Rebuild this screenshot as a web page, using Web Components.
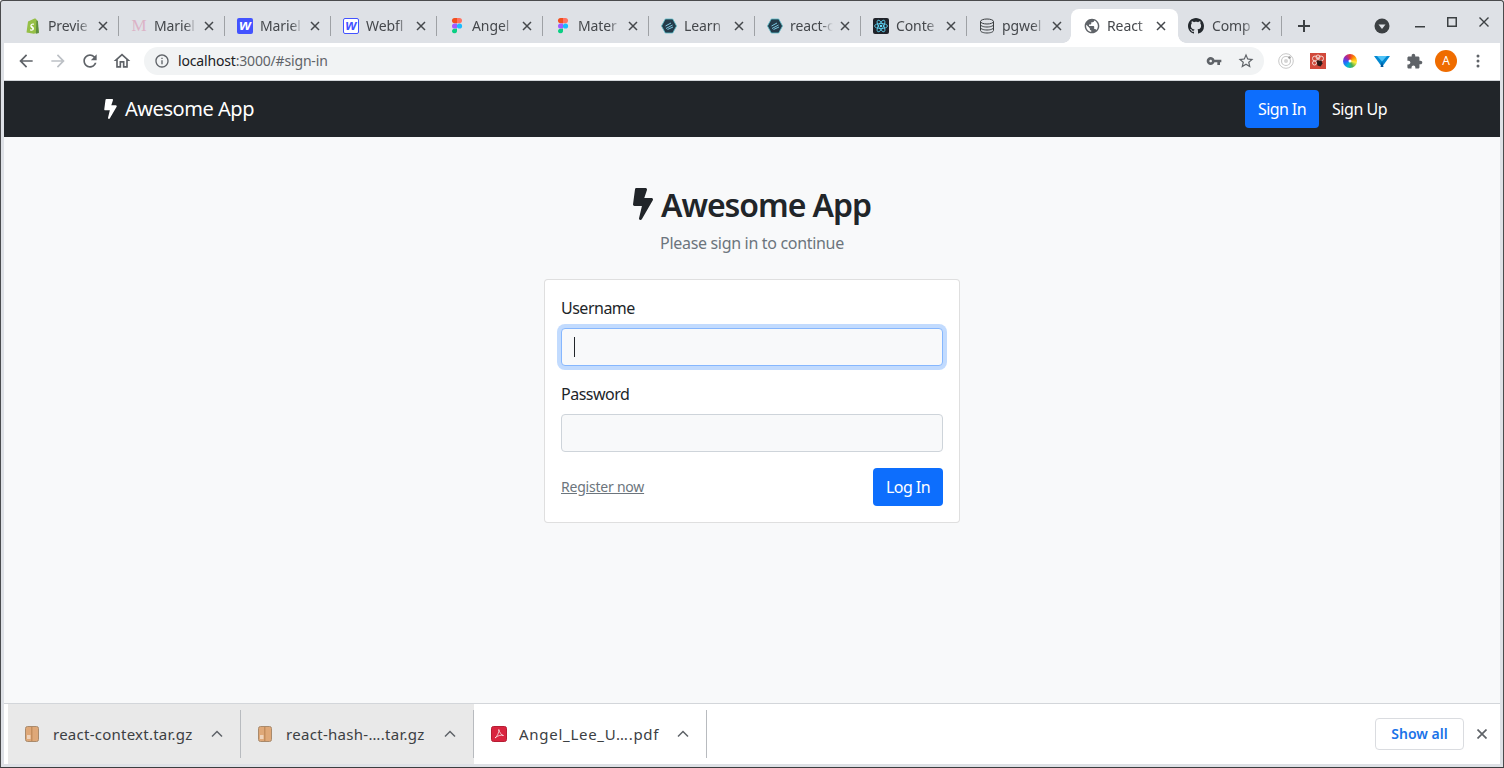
<!DOCTYPE html>
<html lang="en"><head><meta charset="utf-8"><title>React App</title>
<style>
html,body{margin:0;height:100%;overflow:hidden}
body{font-family:"Noto Sans","Open Sans",sans-serif}
svg{display:block}
</style></head><body>
<template id="bolt-t"><svg viewBox="0 0 320 512" width="100%" height="100%" style="display:block"><path fill="currentColor" d="M296 160H180.6l42.6-129.8C227.2 15 215.7 0 200 0H56C44 0 33.8 8.9 32.2 20.8l-32 240C-1.7 275.2 9.5 288 24 288h118.7L96.6 482.5c-3.6 15.2 8 29.5 23.3 29.5 8.4 0 16.4-4.4 20.8-12l176-304c9.3-15.9-2.2-36-20.7-36z"/></svg></template>

<app-window>
  <tab-strip slot="tabs">
    <chrome-tab label="Previe"><svg slot="icon" width="16" height="16" viewBox="0 0 16 16" style="display:block"><path fill="#95bf47" d="M3 3.6 9.6.6c.8-.3 1.4 0 1.8 1l.8 1 1.6 12-5 1.2-7.3-1.4z"/><path fill="#5e8e3e" d="m11.4 2.5 1.2.3.3.3 1 12-3 .7z"/><path fill="#fff" d="M9 5.7 8.6 7c-1.4-.6-2.1 0-2 .5.1.8 2.4 1 2.4 3.1 0 2-2.6 2.9-4 1.7l.4-1.4c.8.7 2 .8 2 0 0-1-2-1-2.1-2.9C5.200 6.200 7.400 4.900 9 5.700z"/></svg></chrome-tab>
    <chrome-tab label="Mariel"><span slot="icon" style="display:block;width:16px;text-align:center;font:17px/16px 'Liberation Serif',serif;color:#dcb3c6">M</span></chrome-tab>
    <chrome-tab label="Mariel"><span slot="icon" style="display:block;width:16px;height:16px;border-radius:2px;background:#4353ff;color:#fff;text-align:center;font:italic 700 15px/14px 'Liberation Sans',sans-serif">w</span></chrome-tab>
    <chrome-tab label="Webfl"><span slot="icon" style="display:block;box-sizing:border-box;width:16px;height:16px;border-radius:2px;border:1px solid #4353ff;background:#fff;color:#4353ff;text-align:center;font:italic 700 14px/12px 'Liberation Sans',sans-serif">w</span></chrome-tab>
    <chrome-tab label="Angel"><fig-icon slot="icon"></fig-icon></chrome-tab>
    <chrome-tab label="Mater"><fig-icon slot="icon"></fig-icon></chrome-tab>
    <chrome-tab label="Learn"><hex-icon slot="icon"></hex-icon></chrome-tab>
    <chrome-tab label="react-c"><hex-icon slot="icon"></hex-icon></chrome-tab>
    <chrome-tab label="Conte"><svg slot="icon" width="16" height="16" viewBox="0 0 16 16" style="display:block"><rect width="16" height="16" rx="2" fill="#20232a"/><g fill="none" stroke="#61dafb" stroke-width=".8"><ellipse cx="8" cy="8" rx="6.500" ry="2.500"/><ellipse cx="8" cy="8" rx="6.500" ry="2.500" transform="rotate(60 8 8)"/><ellipse cx="8" cy="8" rx="6.500" ry="2.500" transform="rotate(120 8 8)"/></g><circle cx="8" cy="8" r="1.300" fill="#61dafb"/></svg></chrome-tab>
    <chrome-tab label="pgwel"><svg slot="icon" width="16" height="16" viewBox="0 0 16 16" style="display:block"><g fill="none" stroke="#3c4043" stroke-width="1"><ellipse cx="8" cy="3.500" rx="6.500" ry="2.500"/><path d="M1.500 3.500v9c0 1.400 2.900 2.500 6.500 2.500s6.500-1.100 6.500-2.500v-9M1.500 6.500C1.500 7.900 4.400 9 8 9s6.500-1.100 6.500-2.500M1.500 9.500c0 1.400 2.900 2.500 6.500 2.500s6.500-1.100 6.500-2.500"/></g></svg></chrome-tab>
    <chrome-tab label="React" active><svg slot="icon" width="16" height="16" viewBox="0 0 24 24" style="display:block"><path fill="#5f6368" d="M12 1C5.900 1 1 5.900 1 12s4.900 11 11 11 11-4.900 11-11S18.100 1 12 1zm-1.100 19.800C6.600 20.300 3.200 16.500 3.200 12c0-.7.100-1.300.2-2l5.300 5.300v1.100c0 1.200 1 2.200 2.200 2.200zm7.600-2.800c-.3-.9-1.100-1.500-2.100-1.500h-1.100v-3.300c0-.6-.5-1.100-1.100-1.100H7.600V9.800h2.200c.6 0 1.100-.5 1.100-1.100V6.500h2.200c1.200 0 2.200-1 2.200-2.200v-.5c3.200 1.300 5.500 4.500 5.500 8.200 0 2.300-.9 4.400-2.300 6z"/></svg></chrome-tab>
    <chrome-tab label="Comp" after-active><svg slot="icon" width="16" height="16" viewBox="0 0 16 16" style="display:block"><path fill="#24292e" d="M8 0C3.580 0 0 3.580 0 8c0 3.540 2.290 6.530 5.470 7.590.4.070.55-.17.55-.38 0-.19-.01-.82-.01-1.490-2.010.37-2.530-.49-2.690-.94-.09-.23-.48-.94-.82-1.130-.28-.15-.68-.52-.01-.53.63-.01 1.080.58 1.230.82.72 1.210 1.870.87 2.330.66.070-.52.28-.87.51-1.070-1.780-.2-3.640-.89-3.640-3.950 0-.87.31-1.590.82-2.150-.08-.2-.36-1.020.08-2.120 0 0 .67-.21 2.200.82.64-.18 1.320-.27 2-.27.68 0 1.360.09 2 .27 1.530-1.040 2.200-.82 2.200-.82.44 1.100.16 1.920.08 2.120.51.56.82 1.270.82 2.150 0 3.070-1.870 3.750-3.650 3.950.29.25.54.73.54 1.480 0 1.070-.01 1.930-.01 2.200 0 .21.15.46.55.38A8.013 8.013 0 0016 8c0-4.420-3.580-8-8-8z"/></svg></chrome-tab>
  </tab-strip>
  <tool-bar slot="toolbar"></tool-bar>
  <site-nav slot="nav"></site-nav>
  <sign-in-page slot="main"></sign-in-page>
  <download-bar slot="downloads">
    <download-item label="react-context.tar.gz" tint><pkg-icon slot="icon"></pkg-icon></download-item>
    <download-item label="react-hash-….tar.gz" tint style="--ls:.3px"><pkg-icon slot="icon"></pkg-icon></download-item>
    <download-item label="Angel_Lee_U….pdf" style="--ls:.72px"><svg slot="icon" width="16" height="16" viewBox="0 0 16 16" style="display:block"><rect x=".5" y=".5" width="15" height="15" rx="2" fill="#d9243f" stroke="#b51d33"/><path fill="none" stroke="#fff" stroke-width=".7" d="M7.800 3.500c.5 2.500-1.500 7-3.800 8.500 3-2.500 5.500-3.200 8.500-2.500-2-.2-4-3-4.700-6z"/></svg></download-item>
  </download-bar>
</app-window>

<script>
const def=(n,html,init)=>customElements.define(n,class extends HTMLElement{
  connectedCallback(){ if(this.shadowRoot)return; const r=this.attachShadow({mode:'open'});
    r.innerHTML=typeof html==='function'?html(this):html; init&&init(r,this);}
});
const UI='"Noto Sans","Open Sans",sans-serif';
const ic=(d,fill='#5f6368',s=24,box=24)=>`<svg width="${s}" height="${s}" viewBox="0 0 ${box} ${box}" style="display:block"><path fill="${fill}" d="${d}"/></svg>`;
const bolt=()=>document.getElementById('bolt-t').innerHTML;

def('app-window',`<style>
:host{display:flex;flex-direction:column;box-sizing:border-box;width:1504px;height:768px;border:1px solid #4a4b4d;border-bottom-color:#3c3d3f;border-radius:3px 3px 0 0;padding:0 3px 3px;background:#dee1e6;overflow:hidden}
main{flex:1;min-height:0;display:flex;flex-direction:column;background:#f8f9fa}
</style><slot name="tabs"></slot><slot name="toolbar"></slot><slot name="nav"></slot><main><slot name="main"></slot></main><slot name="downloads"></slot>`);

def('tab-strip',`<style>
:host{display:flex;height:42px;padding-left:8px;align-items:flex-end;background:#dee1e6;color:#3c4043}
svg{display:block}
.tabs{display:flex;align-items:flex-end}
.plus{width:16px;height:16px;margin:0 0 9px 15px}
.right{margin-left:auto;display:flex;align-items:center;height:100%}
.drop{width:16px;height:16px;margin:8px 14px 0 0;}
.min,.max,.cl{width:32px;display:flex;justify-content:center}
.min{margin:10px 0 0}.max{margin:-1px 0 0}.cl{margin:-1px 0 0}
</style><div class="tabs"><slot></slot></div>
<svg class="plus" viewBox="0 0 16 16"><path d="M7 2h2v12H7zM2 7h12v2H2z" fill="#3c4043"/></svg>
<div class="right">
<svg class="drop" viewBox="0 0 16 16"><circle cx="8" cy="8" r="7.500" fill="#3c4043"/><path d="M4.500 6.500h7L8 11z" fill="#dee1e6"/></svg>
<div class="min"><svg width="10" height="2"><rect width="10" height="1.500" fill="#3c4043"/></svg></div>
<div class="max"><svg width="10" height="10"><rect x=".75" y=".75" width="8.500" height="8.500" fill="none" stroke="#3c4043" stroke-width="1.500"/></svg></div>
<div class="cl"><svg width="10" height="10"><path d="M.5.500l9 9M9.500.500l-9 9" stroke="#3c4043" stroke-width="1.400"/></svg></div>
</div>`);

def('chrome-tab',t=>`<style>
:host{display:flex;box-sizing:border-box;width:106px;height:34px;align-items:center;position:relative;padding-left:13px;font:14px/20px ${UI};color:#45484c;letter-spacing:-.1px}
:host([active]){background:#fff;border-radius:8px 8px 0 0;width:107px;margin-left:-1px;z-index:1}
:host([active]) .sep{display:none}
:host([active]) .x{margin-left:6px}
:host([after-active]){margin-left:-3px}
:host([after-active]) .fav{margin-right:8px}
:host([after-active]) .x{margin-left:6px}
:host([active])::before,:host([active])::after{content:"";position:absolute;bottom:0;width:8px;height:8px}
:host([active])::before{left:-8px;background:radial-gradient(circle at 0 0,transparent 7.500px,#fff 8px)}
:host([active])::after{right:-8px;background:radial-gradient(circle at 100% 0,transparent 7.500px,#fff 8px)}
.fav{width:16px;height:16px;flex:none;margin-right:7px}
.title{width:43px;overflow:hidden;white-space:nowrap;-webkit-mask-image:linear-gradient(90deg,#000 72%,transparent);mask-image:linear-gradient(90deg,#000 72%,transparent)}
.x{display:block;margin-left:7px;width:10px;height:10px;flex:none}
.sep{position:absolute;right:-1px;top:7px;width:1px;height:20px;background:#9ea1a5}
</style><span class="fav"><slot name="icon"></slot></span><span class="title">${t.getAttribute('label')}</span>
<svg class="x" viewBox="0 0 10 10"><path d="M1 1l8 8M9 1L1 9" stroke="#45484c" stroke-width="1.500"/></svg><i class="sep"></i>`);

def('fig-icon',`<style>:host{display:block;width:16px;height:16px}</style><svg width="16" height="16" viewBox="0 0 16 16" style="display:block"><path fill="#f24e1e" d="M3 2.600A2.600 2.600 0 0 1 5.600 0H8v5.200H5.600A2.600 2.600 0 0 1 3 2.600z"/><path fill="#ff7262" d="M8 0h2.400a2.600 2.600 0 0 1 0 5.200H8z"/><path fill="#a259ff" d="M3 8a2.600 2.600 0 0 1 2.600-2.600H8v5.200H5.600A2.600 2.600 0 0 1 3 8z"/><circle cx="10.500" cy="8" r="2.600" fill="#1abcfe"/><path fill="#0acf83" d="M3 13.400a2.600 2.600 0 0 1 2.600-2.600H8v2.600a2.600 2.600 0 0 1-5 0z"/></svg>`);
def('hex-icon',`<style>:host{display:block;width:16px;height:16px}</style><svg width="16" height="16" viewBox="0 0 16 16" style="display:block"><path fill="#243b4a" stroke="#5bbcc9" stroke-width=".8" d="M4.300 1h7.400L15.500 8l-3.800 7H4.300L.5 8z"/><path stroke="#7cc6e0" stroke-width="1" d="M4.500 8 10 5M5 10.500l6.500-3.500M6.500 11.500 12 9"/></svg>`);
def('pkg-icon',`<style>:host{display:block;width:14px;height:16px}</style><svg width="14" height="16" viewBox="0 0 14 16" style="display:block"><rect x=".5" y=".5" width="13" height="15" rx="2" fill="#dfa878" stroke="#a98a6c"/><rect x="6" y="1" width="1.500" height="14" fill="#c48d5d"/><path d="M2 10h3.500M2 12h3.500" stroke="#fff"/></svg>`);

def('tool-bar',`<style>
:host{display:flex;box-sizing:border-box;height:38px;background:#fff;border-bottom:1px solid #d3d6da;align-items:center;padding:0 0 1px 6px}
svg{display:block}
.b{width:32px;display:flex;justify-content:center;align-items:center;flex:none}
.o{width:1120px;height:28px;margin-left:6px;border-radius:14px;background:#f1f3f4;display:flex;align-items:center;padding:0 9px 0 10px;box-sizing:border-box;font:14px/20px ${UI};color:#5f6368;letter-spacing:-.17px}
.o b{font-weight:400;color:#202124}
.o .u{margin-left:8px;flex:1}
.o span+svg{margin-right:15px}
.ext{margin-left:6px;display:flex}
.av{width:22px;height:22px;border-radius:50%;background:#ef6c00;color:#fff;font:12px/22px ${UI};text-align:center}
</style>
<div class="b">${ic('M20 11H7.830l5.590-5.590L12 4l-8 8 8 8 1.410-1.410L7.830 13H20v-2z','#5f6368',20)}</div>
<div class="b">${ic('M12 4l-1.410 1.410L16.170 11H4v2h12.170l-5.580 5.590L12 20l8-8z','#bdc1c6',20)}</div>
<div class="b">${ic('M17.650 6.350C16.200 4.900 14.210 4 12 4c-4.420 0-7.990 3.580-7.990 8s3.570 8 7.990 8c3.730 0 6.840-2.550 7.730-6h-2.080c-.82 2.330-3.040 4-5.650 4-3.310 0-6-2.690-6-6s2.690-6 6-6c1.660 0 3.140.69 4.220 1.780L13 11h7V4l-2.350 2.350z','#5f6368',20)}</div>
<div class="b">${ic('M12 5.690l5 4.500V18h-2v-6H9v6H7v-7.810l5-4.500M12 3L2 12h3v8h6v-6h2v6h6v-8h3L12 3z','#5f6368',20)}</div>
<div class="o">${ic('M11 7h2v2h-2zm0 4h2v6h-2zm1-9C6.480 2 2 6.480 2 12s4.480 10 10 10 10-4.480 10-10S17.520 2 12 2zm0 18c-4.410 0-8-3.590-8-8s3.590-8 8-8 8 3.590 8 8-3.590 8-8 8z','#5f6368',16)}
<span class="u"><b>localhost</b>:3000/#sign-in</span>
${ic('M12.650 10C11.830 7.670 9.610 6 7 6c-3.310 0-6 2.690-6 6s2.690 6 6 6c2.610 0 4.830-1.670 5.650-4H17v4h4v-4h2v-4H12.650zM7 14c-1.100 0-2-.9-2-2s.9-2 2-2 2 .9 2 2-.9 2-2 2z','#5f6368',16)}
${ic('M22 9.240l-7.190-.62L12 2 9.190 8.630 2 9.240l5.460 4.730L5.820 21 12 17.270 18.180 21l-1.630-7.030L22 9.240zM12 15.400l-3.760 2.270 1-4.280-3.320-2.880 4.380-.38L12 6.100l1.710 4.040 4.380.38-3.320 2.880 1 4.280L12 15.400z','#5f6368',18)}</div>
<div class="ext">
<div class="b"><svg width="16" height="16" viewBox="0 0 16 16"><g fill="none" stroke="#c8c8c8"><circle cx="8" cy="8" r="7.300"/><circle cx="8" cy="8" r="4.500" stroke-width="1.200"/></g><circle cx="8" cy="8" r="2" fill="#d5d5d5"/><circle cx="11.500" cy="4.500" r="1.300" fill="#999"/></svg></div>
<div class="b"><svg width="16" height="16" viewBox="0 0 16 16"><rect width="16" height="16" fill="#d1493b"/><g fill="none" stroke="#f3d5cf" stroke-width="1"><circle cx="5" cy="5.500" r="2.500"/><circle cx="11" cy="5.500" r="2.500"/><circle cx="8" cy="4" r="2"/><circle cx="4.500" cy="10" r="2"/></g><path d="M6.500 7.500h5l1 3-2 3-3-1z" fill="#2a1a18"/></svg></div>
<div class="b"><svg width="14" height="14" viewBox="0 0 14 14" style="border-radius:50%;background:conic-gradient(#e53935,#ff9800,#ffeb3b,#4caf50,#00bcd4,#2962ff,#9c27b0,#e53935)"><circle cx="7" cy="7" r="1.500" fill="#fff"/></svg></div>
<div class="b"><svg width="16" height="16" viewBox="0 0 16 16"><path d="M0 3h16L8 14z" fill="#0288d1"/><path d="M3 3h10L8 8.500z" fill="#4fc3f7"/><path d="M6.500 14 8 8.500 9.500 14z" fill="#01579b"/></svg></div>
<div class="b">${ic('M20.500 11H19V7c0-1.100-.9-2-2-2h-4V3.500C13 2.120 11.880 1 10.500 1S8 2.120 8 3.500V5H4c-1.100 0-1.990.9-1.990 2v3.800H3.500c1.490 0 2.700 1.210 2.700 2.700s-1.210 2.700-2.700 2.700H2V20c0 1.100.9 2 2 2h3.800v-1.500c0-1.490 1.210-2.700 2.700-2.700 1.490 0 2.700 1.210 2.700 2.700V22H17c1.100 0 2-.9 2-2v-4h1.500c1.380 0 2.500-1.120 2.500-2.500S21.880 11 20.500 11z','#5f6368',17)}</div>
<div class="b"><div class="av">A</div></div>
<div class="b"><svg width="4" height="14"><circle cx="2" cy="2" r="1.500" fill="#5f6368"/><circle cx="2" cy="7" r="1.500" fill="#5f6368"/><circle cx="2" cy="12" r="1.500" fill="#5f6368"/></svg></div>
</div>`);

def('site-nav',()=>`<style>
:host{display:flex;height:56px;box-sizing:border-box;align-items:center;background:#212529;color:#fff;padding:0 104px 0 99px;font:16px/24px ${UI};letter-spacing:-.35px}
.brand{display:flex;align-items:center;font-size:20px;line-height:30px;letter-spacing:-.45px}
.bolt{width:15px;height:20px;margin-right:7px}
.sp{flex:1}
.btn{background:#0d6efd;border-radius:4px;padding:7px 0;width:74px;height:38px;box-sizing:border-box;text-align:center;letter-spacing:-.6px}
.lnk{margin-left:13px;width:64px;white-space:nowrap;letter-spacing:-.45px}
</style><span class="brand"><span class="bolt">${bolt()}</span>Awesome App</span><span class="sp"></span><span class="btn">Sign In</span><span class="lnk">Sign Up</span>`);

def('sign-in-page',()=>`<style>
:host{display:flex;flex-direction:column;align-items:center;padding-top:48px;color:#212529;font:16px/24px ${UI};letter-spacing:-.35px}
h1{display:flex;align-items:center;margin:0;font-size:32px;line-height:40px;font-weight:600;letter-spacing:-1.05px}
.bolt{width:20px;height:32px;margin-right:8px;margin-top:-2px}
p{margin:6px 0 24px;color:#6c757d;line-height:24px;letter-spacing:-.32px}
.card{width:416px;box-sizing:border-box;background:#fff;border:1px solid rgba(0,0,0,.125);border-radius:4px;padding:16px}
label{display:block;height:24px;margin-bottom:8px;letter-spacing:-.5px}
.in{box-sizing:border-box;height:38px;border:1px solid #ced4da;border-radius:4px;background:#f8f9fa;margin-bottom:16px;display:flex;align-items:center;padding-left:12px}
.in.f{border-color:#86b7fe;box-shadow:0 0 0 4px rgba(13,110,253,.25)}
.in.f i{display:block;width:1px;height:20px;background:#212529}
.row{display:flex;justify-content:space-between;align-items:center;margin-top:16px}
a{font-size:14px;line-height:20px;color:#6c757d;text-decoration:underline;letter-spacing:-.22px}
button{all:unset;box-sizing:border-box;width:70px;height:38px;background:#0d6efd;color:#fff;border-radius:4px;text-align:center;font:16px/38px ${UI};letter-spacing:-.55px}
</style><h1><span class="bolt">${bolt()}</span>Awesome App</h1><p>Please sign in to continue</p>
<div class="card"><label>Username</label><div class="in f"><i></i></div><label>Password</label><div class="in" style="margin-bottom:0"></div>
<div class="row"><a>Register now</a><button>Log In</button></div></div>`);

def('download-bar',`<style>
:host{display:flex;box-sizing:border-box;height:61px;background:#fff;border-top:1px solid #d3d6da;align-items:stretch;padding-left:4px}
.sp{flex:1}
.all{align-self:center;box-sizing:border-box;width:89px;height:32px;margin-right:13px;border:1px solid #dadce0;border-radius:4px;color:#1a73e8;font:600 14px/29px ${UI};text-align:center;letter-spacing:0}
.x{display:block;align-self:center;margin-right:13px}
</style><slot></slot><span class="sp"></span><span class="all">Show all</span><svg class="x" width="10" height="10" viewBox="0 0 10 10"><path d="M.5.500l9 9M9.500.500l-9 9" stroke="#5f6368" stroke-width="1.700"/></svg>`);

def('download-item',t=>`<style>
:host{display:flex;box-sizing:border-box;width:233px;align-items:center;position:relative;padding-left:17px;font:15px/20px ${UI};color:#3c4043;letter-spacing:var(--ls,.25px)}
:host([tint]){background:#e9e9e9}
.ic{width:14px;flex:none;margin-right:14px}
.t{width:150px;white-space:nowrap;overflow:hidden}
.c{display:block;margin-left:8px;flex:none}
.sep{position:absolute;right:0;top:6px;bottom:6px;width:1px;background:#b8bbbf}
</style><span class="ic"><slot name="icon"></slot></span><span class="t">${t.getAttribute('label')}</span><svg class="c" width="12" height="8" viewBox="0 0 12 8"><path d="M1 6.500l5-5 5 5" fill="none" stroke="#5f6368" stroke-width="1.500"/></svg><i class="sep"></i>`);
</script>
</body></html>
